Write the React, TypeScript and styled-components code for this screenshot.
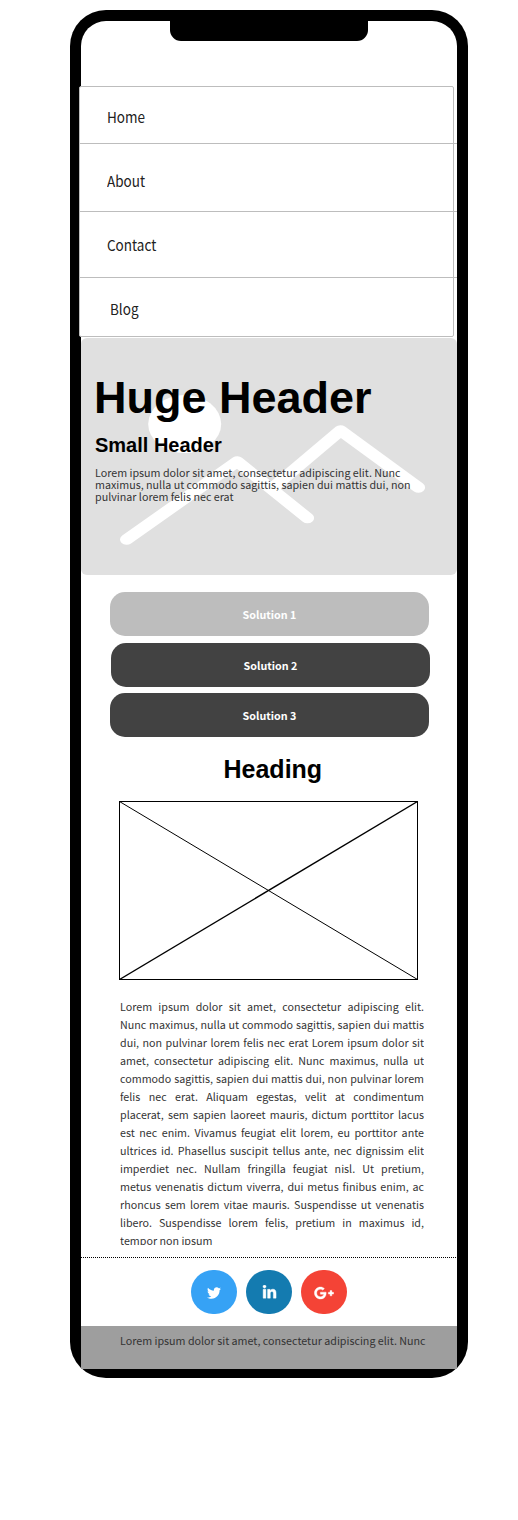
import React from "react";
import styled, { createGlobalStyle } from "styled-components";
import { FaTwitter, FaLinkedinIn, FaGooglePlusG } from "react-icons/fa";

const GlobalStyle = createGlobalStyle`
  * { box-sizing: border-box; }
  body {
    margin: 0;
    background: #fff;
    color: #333;
    font-family: "Noto Sans CJK SC", "Noto Sans", sans-serif;
    font-size: 10.73px;
  }
  h1, h2, p { margin: 0; }
`;

const Page = styled.main`
  padding: 10px 50px 142px 70px;
  width: 518px;
`;

const Phone = styled.div`
  width: 398px;
  height: 1368px;
  padding: 11px 11px 9px;
  background: #000;
  border-radius: 36px;
`;

const Screen = styled.div`
  display: flex;
  flex-direction: column;
  height: 1348px;
  background: #fff;
  border-radius: 25px 25px 0 0;
`;

const Notch = styled.div`
  flex: none;
  width: 198px;
  height: 20px;
  margin-left: 89px;
  background: #000;
  border-radius: 0 0 11px 11px;
`;

const Menu = styled.nav`
  flex: none;
  width: 375px;
  height: 251px;
  margin: 45px 0 0 -2px;
  border: 1px solid #bdbdbd;
  border-radius: 2px;
  background: #fff;
`;

const MenuItem = styled.a<{ $height: number; $top: number; $indent?: number; $last?: boolean }>`
  display: block;
  width: ${(p) => (p.$last ? 373 : 377)}px;
  height: ${(p) => p.$height}px;
  padding: ${(p) => p.$top}px 0 0 ${(p) => p.$indent ?? 27}px;
  border-bottom: ${(p) => (p.$last ? "none" : "1px solid #bdbdbd")};
  color: #212121;
  font-size: 15px;
  line-height: 20px;
`;

const MenuLabel = styled.span`
  display: inline-block;
  transform: scaleX(0.9);
  transform-origin: left center;
`;

const Hero = styled.section`
  display: grid;
  flex: none;
  height: 237px;
  margin-top: 1px;
  border-radius: 6px;
  background: #e0e0e0;
  > * { grid-area: 1 / 1; }
`;

const HeroCopy = styled.div`
  z-index: 1;
  padding: 34px 0 0 14px;
  h1, h2 {
    color: #000;
    font-family: "Liberation Sans", Arial, sans-serif;
    font-weight: 700;
  }
  h1 { margin-left: -1px; font-size: 45px; line-height: 52px; }
  h2 { margin-top: 9px; font-size: 20px; line-height: 24px; }
  p { width: 330px; margin-top: 10px; line-height: 12px; }
`;

const Solutions = styled.div`
  display: flex;
  flex: none;
  flex-direction: column;
  margin: 17px 0 0 29px;
`;

const SolutionButton = styled.button<{ $muted?: boolean; $shift?: number; $gap?: number }>`
  width: 319px;
  height: 44px;
  margin: 0 0 ${(p) => p.$gap ?? 0}px ${(p) => p.$shift ?? 0}px;
  padding: 2px 0 0;
  border: 0;
  border-radius: 15px;
  background: ${(p) => (p.$muted ? "#bdbdbd" : "#424242")};
  color: #fff;
  font: 700 10.74px/18px "Noto Sans CJK SC", sans-serif;
`;

const Heading = styled.h2`
  flex: none;
  margin: 17px 0 0 142.5px;
  color: #000;
  font: 700 25px/30px "Liberation Sans", Arial, sans-serif;
`;

const Placeholder = styled.svg`
  display: block;
  flex: none;
  width: 299px;
  height: 179px;
  margin: 17px 0 0 38px;
`;

const Article = styled.p`
  flex: none;
  width: 304px;
  height: 247px;
  margin: 18px 0 0 39px !important;
  overflow: hidden;
  line-height: 18px;
  text-align: justify;
`;

const Divider = styled.hr`
  flex: none;
  width: 376px;
  height: 1px;
  margin: 12px 0 0;
  border: 0;
  background: repeating-linear-gradient(90deg, #000 0 1px, transparent 1px 2px);
`;

const Socials = styled.div`
  display: flex;
  flex: none;
  gap: 9px;
  margin: 12px 0 0 110px;
`;

const Social = styled.a<{ $color: string }>`
  display: flex;
  align-items: center;
  justify-content: center;
  width: 46px;
  height: 44px;
  padding-top: 1px;
  border-radius: 22px;
  background: ${(p) => p.$color};
  color: #fff;
`;

const Footer = styled.footer`
  flex: none;
  height: 43px;
  margin-top: 12px;
  padding: 6px 0 0 39px;
  background: #9e9e9e;
  line-height: 18px;
  white-space: nowrap;
`;

export default function App() {
  return (
    <Page>
      <GlobalStyle />
      <Phone>
        <Screen>
          <Notch />
          <Menu>
            <MenuItem $height={57} $top={20}><MenuLabel>Home</MenuLabel></MenuItem>
            <MenuItem $height={68} $top={27}><MenuLabel>About</MenuLabel></MenuItem>
            <MenuItem $height={66} $top={23}><MenuLabel>Contact</MenuLabel></MenuItem>
            <MenuItem $height={58} $top={21} $indent={30} $last><MenuLabel>Blog</MenuLabel></MenuItem>
          </Menu>
          <Hero>
            <svg width="376" height="237" viewBox="0 0 376 237" fill="none">
              <ellipse cx="103.7" cy="86" rx="36.5" ry="29" fill="#fff" />
              <g transform="scale(1.25 1)" stroke="#fff" strokeWidth="10.6" strokeLinecap="round" strokeLinejoin="round">
                <path d="M36.5 201.5 L125 123.5 L181.2 180" />
                <path d="M156 147 L207.6 92.5 L270 149.5" />
              </g>
            </svg>
            <HeroCopy>
              <h1>Huge Header</h1>
              <h2>Small Header</h2>
              <p>Lorem ipsum dolor sit amet, consectetur adipiscing elit. Nunc maximus, nulla ut commodo sagittis, sapien dui mattis dui, non pulvinar lorem felis nec erat</p>
            </HeroCopy>
          </Hero>
          <Solutions>
            <SolutionButton $muted $gap={7}>Solution 1</SolutionButton>
            <SolutionButton $shift={1} $gap={6}>Solution 2</SolutionButton>
            <SolutionButton>Solution 3</SolutionButton>
          </Solutions>
          <Heading>Heading</Heading>
          <Placeholder viewBox="0 0 299 179" fill="none" stroke="#000">
            <rect x="0.5" y="0.5" width="298" height="178" />
            <path d="M0.5 0.5 L298.5 178.5" />
            <path d="M298.5 0.5 L0.5 178.5" strokeWidth="1.35" />
          </Placeholder>
          <Article>
            Lorem ipsum dolor sit amet, consectetur adipiscing elit. Nunc maximus, nulla ut commodo sagittis, sapien dui
            mattis dui, non pulvinar lorem felis nec erat Lorem ipsum dolor sit amet, consectetur adipiscing elit. Nunc
            maximus, nulla ut commodo sagittis, sapien dui mattis dui, non pulvinar lorem felis nec erat. Aliquam
            egestas, velit at condimentum placerat, sem sapien laoreet mauris, dictum porttitor lacus est nec enim.
            Vivamus feugiat elit lorem, eu porttitor ante ultrices id. Phasellus suscipit tellus ante, nec dignissim
            elit imperdiet nec. Nullam fringilla feugiat nisl. Ut pretium, metus venenatis dictum viverra, dui metus
            finibus enim, ac rhoncus sem lorem vitae mauris. Suspendisse ut venenatis libero. Suspendisse lorem felis,
            pretium in maximus id, tempor non ipsum
          </Article>
          <Divider />
          <Socials>
            <Social $color="#36a2f5"><FaTwitter size={14} /></Social>
            <Social $color="#147bb0"><FaLinkedinIn size={15} stroke="#fff" strokeWidth={14} /></Social>
            <Social $color="#f44336"><FaGooglePlusG size={20} stroke="#fff" strokeWidth={12} /></Social>
          </Socials>
          <Footer>Lorem ipsum dolor sit amet, consectetur adipiscing elit. Nunc</Footer>
        </Screen>
      </Phone>
    </Page>
  );
}
